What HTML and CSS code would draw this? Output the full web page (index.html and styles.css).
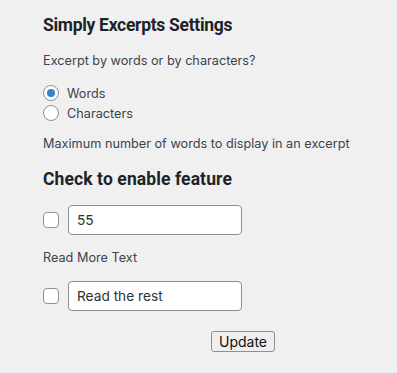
FILE: index.html
```html
<!DOCTYPE html>
<html lang="en">
<head>
<meta charset="utf-8">
<title>Simply Excerpts Settings</title>
<link rel="stylesheet" href="styles.css">
</head>
<body>
<div class="wrap">
  <h2 class="title title-first">Simply Excerpts Settings</h2>
  <p class="desc desc-first">Excerpt by words or by characters?</p>
  <div class="radios">
    <label class="radio-row"><input class="radio" type="radio" name="by" checked><span>Words</span></label>
    <label class="radio-row"><input class="radio" type="radio" name="by"><span>Characters</span></label>
  </div>
  <p class="desc desc-max">Maximum number of words to display in an excerpt</p>
  <h2 class="title title-second">Check to enable feature</h2>
  <div class="field-row field-first">
    <input class="check" type="checkbox">
    <input class="text" type="text" value="55">
  </div>
  <p class="desc desc-more">Read More Text</p>
  <div class="field-row field-second">
    <input class="check" type="checkbox">
    <input class="text" type="text" value="Read the rest">
  </div>
  <div class="actions">
    <button class="update" type="button">Update</button>
  </div>
</div>
</body>
</html>
```
FILE: styles.css
```css
html, body {
  margin: 0;
  padding: 0;
  background: #f0f0f1;
}
body {
  font-family: Inter, "Liberation Sans", sans-serif;
  color: #3c434a;
  font-size: 12.7px;
}
.wrap {
  padding: 14px 0 0 43px;
}
.title {
  margin: 0;
  font-family: Roboto, "Liberation Sans", sans-serif;
  font-weight: 700;
  line-height: 23px;
  color: #1d2327;
  font-size: 17.5px;
}
.title-first {
  letter-spacing: -0.3px;
}
.title-second {
  margin-top: 14px;
  letter-spacing: 0.1px;
}
.desc {
  margin: 0;
  font-size: 12.7px;
  line-height: 20px;
}
.desc-first {
  margin-top: 14px;
}
.radios {
  margin-top: 12px;
  display: flex;
  flex-direction: column;
}
.radio-row {
  display: flex;
  align-items: center;
  height: 20px;
  gap: 8px;
}
.radio {
  -webkit-appearance: none;
  appearance: none;
  margin: 0;
  width: 16px;
  height: 16px;
  border: 1px solid #8c8f94;
  border-radius: 50%;
  background: #fff;
  box-sizing: border-box;
  display: flex;
  align-items: center;
  justify-content: center;
}
.radio:checked::before {
  content: "";
  width: 8px;
  height: 8px;
  border-radius: 50%;
  background: #3582c4;
}
.desc-max {
  margin-top: 11px;
}
.field-row {
  display: flex;
  align-items: center;
  gap: 9px;
}
.field-first {
  margin-top: 14px;
}
.field-second {
  margin-top: 13px;
}
.desc-more {
  margin-top: 13px;
}
.check {
  -webkit-appearance: none;
  appearance: none;
  margin: 0;
  width: 16px;
  height: 16px;
  border: 1px solid #8c8f94;
  border-radius: 4px;
  background: #fff;
  box-sizing: border-box;
}
.text {
  width: 174px;
  height: 30px;
  box-sizing: border-box;
  border: 1px solid #8c8f94;
  border-radius: 4px;
  background: #fff;
  padding: 0 8px;
  font-family: Inter, "Liberation Sans", sans-serif;
  font-size: 13.7px;
  color: #2c3338;
  margin: 0;
}
.actions {
  margin-top: 20px;
  padding-left: 168px;
}
.update {
  height: 21px;
  padding: 0 7px;
  border: 1px solid #8f8f8f;
  border-radius: 3px;
  background: #efefef;
  font-family: Inter, "Liberation Sans", sans-serif;
  font-size: 14px;
  color: #111;
  margin: 0;
}
```
